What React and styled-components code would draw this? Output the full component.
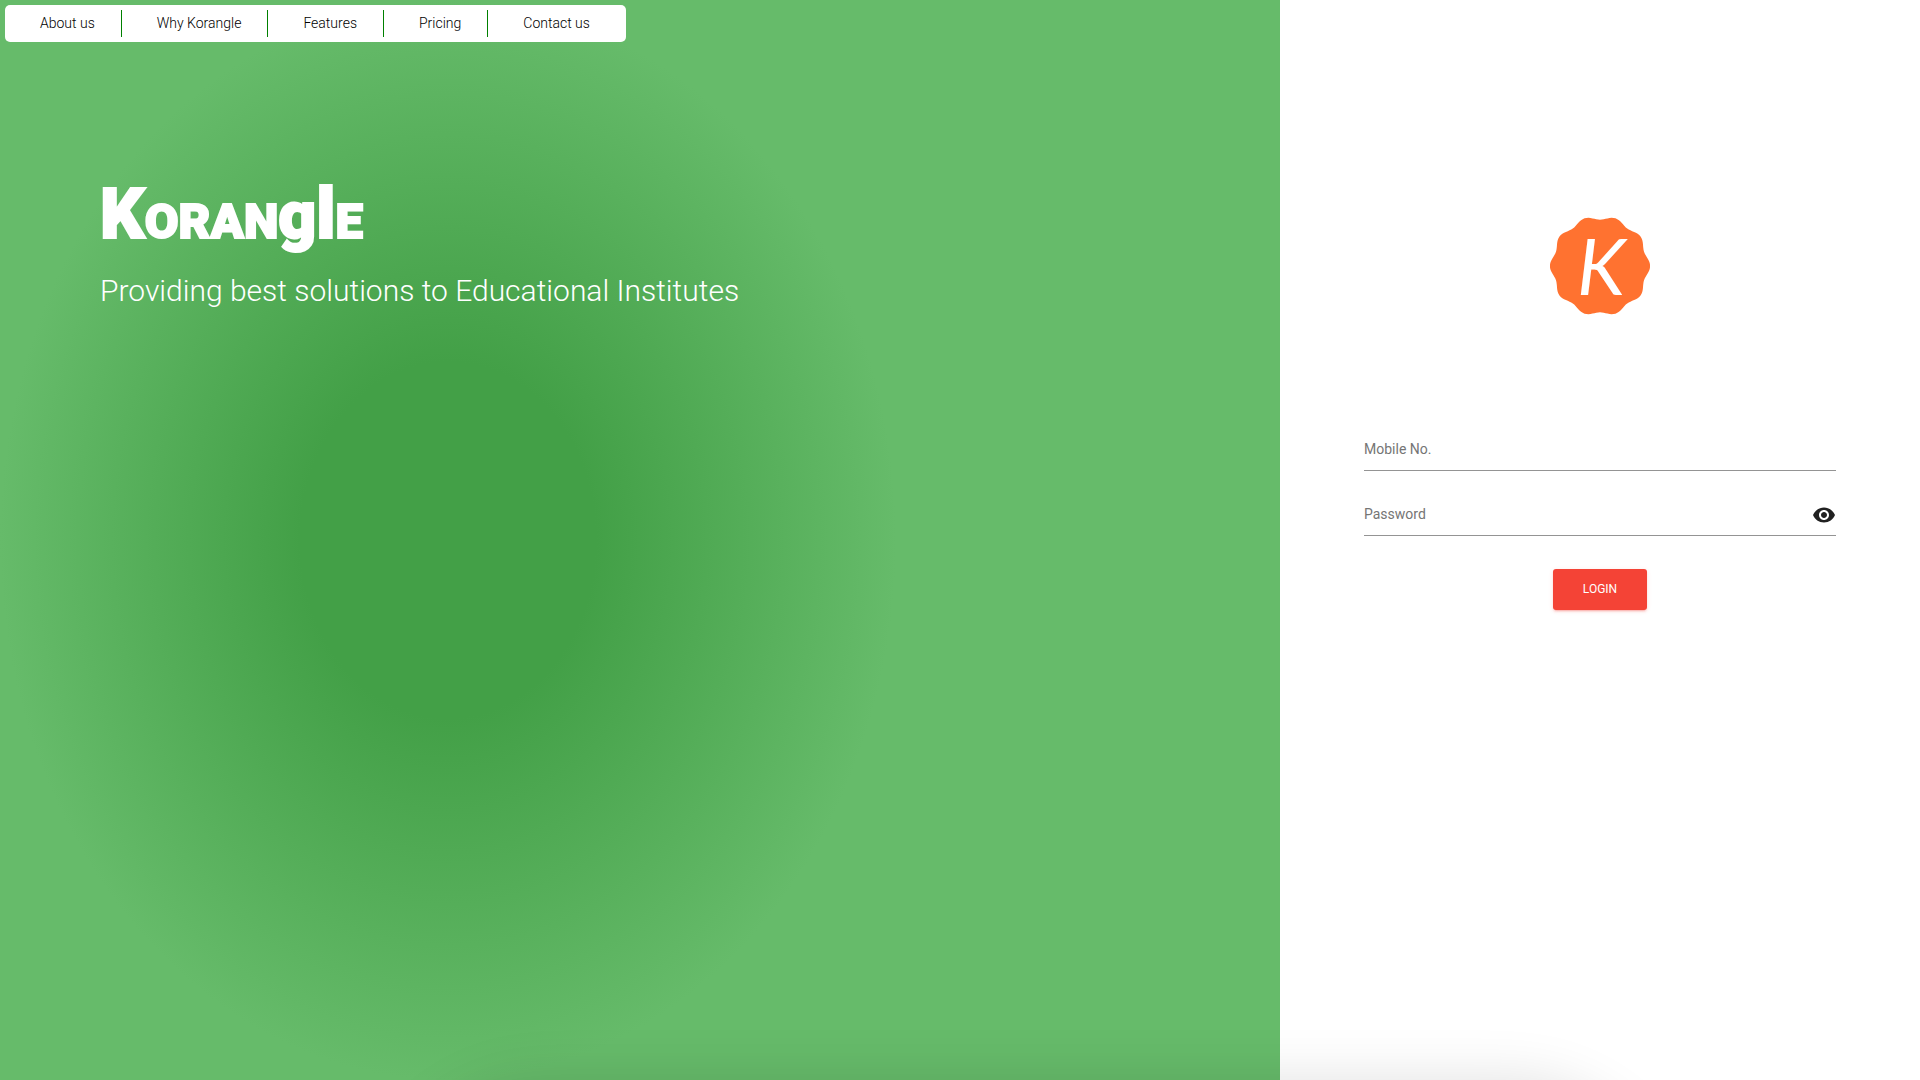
import React from "react";
import styled, { createGlobalStyle } from "styled-components";
import { MdVisibility } from "react-icons/md";

const GlobalStyle = createGlobalStyle`
  *, *::before, *::after { box-sizing: border-box; }
  body {
    margin: 0;
    background: #fff;
    font-family: Roboto, "Liberation Sans", sans-serif;
    font-weight: 300;
    color: #000;
    overflow: hidden;
  }
`;

const Page = styled.div`
  display: grid;
  grid-template-columns: 2fr 1fr;
  min-height: 100vh;
`;

const Hero = styled.section`
  min-width: 0;
  padding: 5px;
  background: radial-gradient(closest-side at 35% 50%, #43a047 33%, #66bb6a 100%);
`;

const Nav = styled.nav`
  display: flex;
  width: fit-content;
  padding: 5px 0;
  border-radius: 5px;
  background: #fff;
`;

const NavLink = styled.a`
  padding: 0 26px 0 35px;
  border-right: 1px solid #008000;
  font-size: 14px;
  line-height: 27px;
  color: #000;
  text-decoration: none;

  &:last-child {
    padding-right: 36px;
    border-right: 0;
  }
`;

const Intro = styled.header`
  padding: 130px 95px 0;
  color: #fff;
`;

const Wordmark = styled.h1`
  margin: 0;
  font-weight: 900;
  line-height: 84px;
  white-space: nowrap;
  -webkit-text-stroke: 2px #fff;
`;

const Letters = styled.span`
  font-size: ${({ $size }) => $size}px;
`;

const Tagline = styled.p`
  margin: 2px 0 0;
  font-size: 30px;
  line-height: 40px;
`;

const LoginPanel = styled.main`
  min-width: 0;
  display: flex;
  flex-direction: column;
  align-items: center;
  padding: 216px 84px 0;
`;

const Badge = styled.svg`
  width: 100px;
  height: 100px;
`;

const BadgeLetter = styled.text`
  font-family: Lato, sans-serif;
  font-size: 78px;
  font-weight: 400;
  font-style: italic;
  fill: #fff;
`;

const LoginForm = styled.form`
  display: flex;
  flex-direction: column;
  align-items: center;
  gap: 24px;
  width: 100%;
  margin-top: 114px;
`;

const Field = styled.label`
  display: flex;
  align-items: center;
  width: 100%;
  height: 41px;
  border-bottom: 1px solid #949494;
`;

const Input = styled.input`
  flex: 1;
  min-width: 0;
  height: 40px;
  padding: 0 0 2px;
  border: 0;
  outline: 0;
  background: transparent;
  font: 400 14px/20px Roboto, sans-serif;
  color: #000;

  &::placeholder {
    color: #757575;
    opacity: 1;
  }
`;

const RevealButton = styled.button`
  display: flex;
  padding: 0;
  border: 0;
  background: transparent;
  color: #212121;
`;

const LoginButton = styled.button`
  margin-top: 9px;
  padding: 0 30px;
  border: 0;
  border-radius: 3px;
  background: #f44336;
  box-shadow: 0 2px 2px 0 rgba(244, 67, 54, 0.14), 0 3px 1px -2px rgba(244, 67, 54, 0.2),
    0 1px 5px 0 rgba(244, 67, 54, 0.12);
  font: 400 12px/41px Roboto, sans-serif;
  color: #fff;
  text-transform: uppercase;
`;

const BottomSheet = styled.div`
  position: fixed;
  top: 100%;
  left: 20%;
  right: 13%;
  height: 400px;
  border-radius: 160px;
  box-shadow: 0 0 56px rgba(0, 0, 0, 0.12);
  pointer-events: none;
`;

const links = ["About us", "Why Korangle", "Features", "Pricing", "Contact us"];

const scallops = () => {
  const points = [];
  for (let i = 0; i < 160; i += 1) {
    const angle = (i / 160) * Math.PI * 2;
    const radius = 48.2 + 1.9 * Math.cos(angle * 10);
    points.push(`${(50 + radius * Math.cos(angle)).toFixed(2)} ${(50 + radius * Math.sin(angle)).toFixed(2)}`);
  }
  return `M${points.join("L")}Z`;
};

export default function App() {
  return (
    <>
      <GlobalStyle />
      <Page>
        <Hero>
          <Nav>
            {links.map((label) => (
              <NavLink href="#" key={label}>{label}</NavLink>
            ))}
          </Nav>
          <Intro>
            <Wordmark>
              <Letters $size={70}>K</Letters>
              <Letters $size={49}>ORAN</Letters>
              <Letters $size={66}>g</Letters>
              <Letters $size={70}>l</Letters>
              <Letters $size={49}>E</Letters>
            </Wordmark>
            <Tagline>Providing best solutions to Educational Institutes</Tagline>
          </Intro>
        </Hero>
        <LoginPanel>
          <Badge viewBox="0 0 100 100" role="img" aria-label="Korangle">
            <path d={scallops()} fill="#ff7230" />
            <BadgeLetter x="51" y="79" textAnchor="middle">K</BadgeLetter>
          </Badge>
          <LoginForm onSubmit={(event) => event.preventDefault()}>
            <Field>
              <Input type="tel" placeholder="Mobile No." aria-label="Mobile No." />
            </Field>
            <Field>
              <Input type="password" placeholder="Password" aria-label="Password" />
              <RevealButton type="button" aria-label="Show password">
                <MdVisibility size={24} />
              </RevealButton>
            </Field>
            <LoginButton type="submit">Login</LoginButton>
          </LoginForm>
        </LoginPanel>
      </Page>
      <BottomSheet />
    </>
  );
}
